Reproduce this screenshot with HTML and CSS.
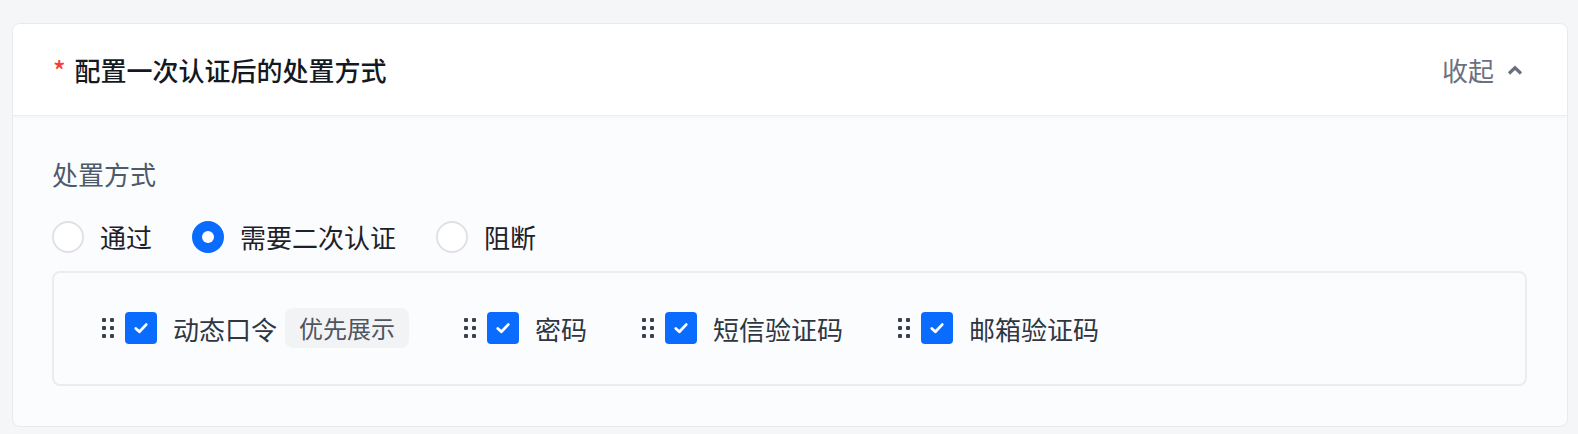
FILE: index.html
```html
<!DOCTYPE HTML>
<html>
<head>
<meta http-equiv='Content-type' content='text/html; charset=utf-8'>
<meta name='viewport' content='width=device-width, initial-scale=1.0'>
<title>处置方式</title>
<link rel="stylesheet" href="styles.css">
</head>

<body>

<div class="card">
	<!-- 卡片头部 -->
	<div class="card-head">
		<div class="card-title"><span class="required">*</span>配置一次认证后的处置方式</div>
		<a class="collapse">收起
			<svg width="16" height="10" viewBox="0 0 16 10"><polyline points="2,8.5 8,2.8 14,8.5" fill="none" stroke="#6b7080" stroke-width="3.2"/></svg>
		</a>
	</div>

	<div class="card-body">
		<div class="field-label">处置方式</div>

		<div class="radio-group">
			<label class="radio"><span class="radio-dot"></span>通过</label>
			<label class="radio checked"><span class="radio-dot"></span>需要二次认证</label>
			<label class="radio"><span class="radio-dot"></span>阻断</label>
		</div>

		<div class="method-box">
			<div class="method">
				<span class="handle"><i></i><i></i><i></i><i></i><i></i><i></i></span>
				<span class="checkbox"><svg width="16" height="16" viewBox="0 0 16 16"><polyline points="2.8,8.4 6.4,11.8 13.2,4.6" fill="none" stroke="#fff" stroke-width="2.8" stroke-linecap="round" stroke-linejoin="round"/></svg></span>
				<span class="method-name">动态口令</span>
				<span class="tag">优先展示</span>
			</div>
			<div class="method">
				<span class="handle"><i></i><i></i><i></i><i></i><i></i><i></i></span>
				<span class="checkbox"><svg width="16" height="16" viewBox="0 0 16 16"><polyline points="2.8,8.4 6.4,11.8 13.2,4.6" fill="none" stroke="#fff" stroke-width="2.8" stroke-linecap="round" stroke-linejoin="round"/></svg></span>
				<span class="method-name">密码</span>
			</div>
			<div class="method">
				<span class="handle"><i></i><i></i><i></i><i></i><i></i><i></i></span>
				<span class="checkbox"><svg width="16" height="16" viewBox="0 0 16 16"><polyline points="2.8,8.4 6.4,11.8 13.2,4.6" fill="none" stroke="#fff" stroke-width="2.8" stroke-linecap="round" stroke-linejoin="round"/></svg></span>
				<span class="method-name">短信验证码</span>
			</div>
			<div class="method">
				<span class="handle"><i></i><i></i><i></i><i></i><i></i><i></i></span>
				<span class="checkbox"><svg width="16" height="16" viewBox="0 0 16 16"><polyline points="2.8,8.4 6.4,11.8 13.2,4.6" fill="none" stroke="#fff" stroke-width="2.8" stroke-linecap="round" stroke-linejoin="round"/></svg></span>
				<span class="method-name">邮箱验证码</span>
			</div>
		</div>
	</div>
</div>

</body>
</html>
```

FILE: styles.css
```css
body {
  margin: 0;
  padding: 23px 10px 8px 12px;
  background: #f5f6f8;
  font-family: "Noto Sans CJK SC", "Noto Sans", sans-serif;
  font-size: 26px;
  color: #1d2129;
}

.card {
  border: 1px solid #e9eaee;
  border-radius: 8px;
  overflow: hidden;
  background: #fbfcfe;
}

.card-head {
  display: flex;
  align-items: center;
  justify-content: space-between;
  height: 91px;
  padding: 0 44px 0 40px;
  background: #fff;
  border-bottom: 1px solid #ebecef;
  box-shadow: 0 1px 4px rgba(0,0,0,0.04);
}
.card-title {
  font-weight: 500;
  line-height: 1.6;
  color: #14181f;
}
.required {
  color: #f53f3f;
  margin-right: 9px;
}
.collapse {
  display: flex;
  align-items: center;
  gap: 13px;
  color: #6b7080;
  cursor: pointer;
}

.card-body {
  padding: 37px 40px 40px 39px;
}
.field-label {
  color: #4e5969;
  line-height: 1.6;
}

.radio-group {
  display: flex;
  align-items: center;
  margin: 21px 0 13px;
  height: 42px;
}
.radio {
  display: flex;
  align-items: center;
  margin-right: 40px;
  color: #1d2129;
}
.radio-dot {
  width: 28px;
  height: 28px;
  border: 2px solid #dfe1e6;
  border-radius: 50%;
  background: #fff;
  margin-right: 16px;
  position: relative;
}
.radio.checked .radio-dot {
  border-color: #0a6cff;
  background: #0a6cff;
}
.radio.checked .radio-dot::after {
  content: "";
  position: absolute;
  left: 8px;
  top: 8px;
  width: 12px;
  height: 12px;
  border-radius: 50%;
  background: #fff;
}

.method-box {
  display: flex;
  align-items: center;
  height: 111px;
  padding-left: 48px;
  border: 2px solid #ebecef;
  border-radius: 8px;
}
.method {
  display: flex;
  align-items: center;
  margin-right: 55px;
}
.handle {
  display: grid;
  grid-template-columns: 4px 4px;
  grid-template-rows: 4px 4px 4px;
  column-gap: 4px;
  row-gap: 4px;
  margin-right: 11px;
}
.handle i {
  background: #3a414d;
  border-radius: 1px;
}
.checkbox {
  width: 32px;
  height: 32px;
  border-radius: 4px;
  background: #0a6cff;
  display: flex;
  align-items: center;
  justify-content: center;
  margin-right: 16px;
}
.method-name {
  color: #2f3642;
}
.tag {
  margin-left: 8px;
  height: 40px;
  line-height: 40px;
  padding: 0 14px;
  border-radius: 8px;
  background: #f2f3f5;
  color: #4e5561;
  font-size: 24px;
}
```
